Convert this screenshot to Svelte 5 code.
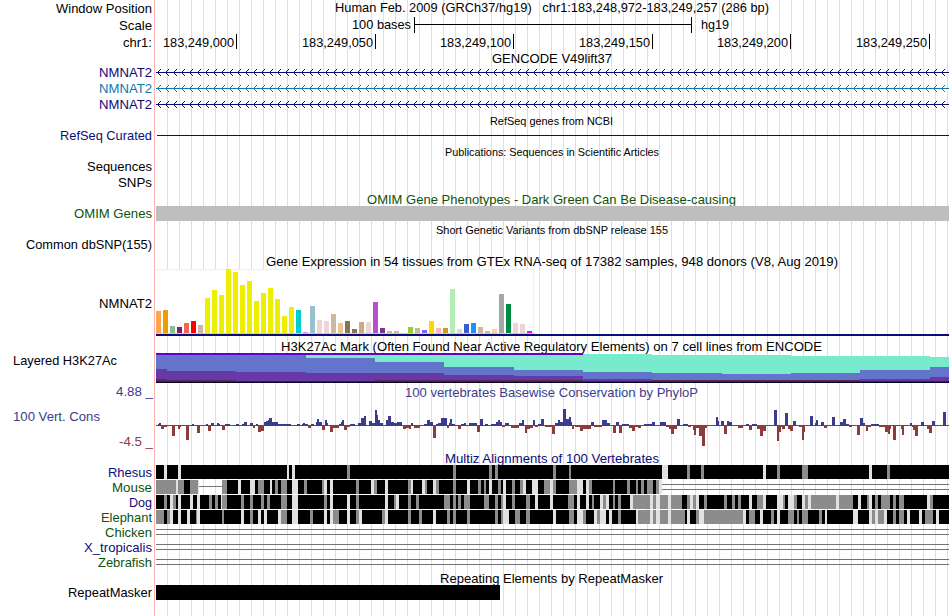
<script lang="ts">
  type Segment = [number, number];
  type Text = { text: string; width: number; color?: string; small?: boolean; y?: number };

  const LEFT = 156;
  const WIDTH = 793;
  const NAVY = '#0c0c78';
  const GREEN = '#0c540c';

  const ticks = [
    { x: 236, label: '183,249,000' },
    { x: 375, label: '183,249,050' },
    { x: 513, label: '183,249,100' },
    { x: 652, label: '183,249,150' },
    { x: 790, label: '183,249,200' },
    { x: 929, label: '183,249,250' }
  ];

  const transcripts = [NAVY, '#0c78b4', NAVY];

  // Chevrons pointing to the reverse strand, one every 8px
  const chevrons = Array.from({ length: 99 }, (_, i) => {
    const x = 157 + i * 8;
    return `M${x + 4} 4L${x + 0.5} 7.5L${x + 4} 11`;
  }).join('');

  // GTEx tissues: colour and bar height
  const tissues: [string, number][] = [
    ['#ffa54f', 22], ['#ee9a00', 23], ['#8fbc8f', 7], ['#8b1c62', 6], ['#ee6a50', 10], ['#ff0000', 12],
    ['#cdb79e', 8], ['#eeee00', 35], ['#eeee00', 43], ['#eeee00', 38], ['#eeee00', 64], ['#eeee00', 61],
    ['#eeee00', 48], ['#eeee00', 52], ['#eeee00', 32], ['#eeee00', 40], ['#eeee00', 45], ['#eeee00', 34],
    ['#eeee00', 17], ['#eeee00', 26], ['#00cdcd', 23], ['#ee82ee', 1], ['#9ac0cd', 27], ['#eed5d2', 13],
    ['#eed5d2', 12], ['#cdb79e', 19], ['#eec591', 10], ['#8b7355', 12], ['#8b7355', 4], ['#cdaa7d', 11],
    ['#eed5d2', 11], ['#b452cd', 31], ['#7a378b', 5], ['#cdb79e', 2], ['#cdb79e', 2], ['#cdb79e', 0],
    ['#9acd32', 6], ['#cdb79e', 5], ['#7a67ee', 3], ['#ffd700', 12], ['#ffb6c1', 5], ['#cd9b1d', 5],
    ['#b4eeb4', 44], ['#d9d9d9', 4], ['#3a5fcd', 9], ['#1e90ff', 10], ['#cdb79e', 6], ['#cdb79e', 2],
    ['#ffd39b', 4], ['#a6a6a6', 39], ['#008b45', 29], ['#eed5d2', 10], ['#eed5d2', 9], ['#ff00ff', 2]
  ];

  // H3K27Ac layers: x, then the top edge of teal, blue, violet and maroon
  const layers = [
    [156, 355, 355, 369, 380],
    [167, 355, 355, 371, 380],
    [236, 355, 355, 372, 381],
    [306, 355, 358, 373, 381],
    [375, 355, 362, 373, 380],
    [444, 355, 367, 375, 380],
    [514, 355, 370, 376, 380],
    [583, 354, 372, 379, 381],
    [652, 355, 373, 380, 380],
    [722, 355, 374, 380, 380],
    [791, 356, 373, 380, 380],
    [860, 356, 370, 379, 381],
    [930, 357, 367, 377, 381]
  ];

  // PhyloP scores: x, width, height (negative values hang below the axis)
  const scores: [number, number, number][] = [
    [158, 1, 1], [159, 2, 2], [161, 3, -4], [164, 3, -2], [172, 3, -11], [178, 2, -4], [180, 1, -2],
    [186, 3, -15], [192, 2, 1], [197, 3, -8], [206, 2, 1], [208, 3, -6], [211, 3, 2], [217, 2, 2],
    [219, 1, 1], [222, 3, -5], [225, 5, 1], [236, 3, 1], [242, 2, 1], [244, 3, 3], [250, 3, 2],
    [253, 2, -3], [256, 2, 1], [258, 3, -7], [261, 3, -6], [264, 2, 3], [266, 2, 4], [268, 1, 5],
    [269, 3, 7], [272, 6, 3], [278, 13, 1], [297, 3, 1], [302, 1, 1], [303, 2, 2], [305, 3, 1],
    [308, 3, -3], [311, 3, 1], [316, 1, 3], [317, 2, 6], [319, 3, 3], [322, 3, -5], [325, 2, 5],
    [327, 1, 2], [330, 3, -7], [333, 6, -3], [339, 2, 1], [341, 1, 3], [342, 2, 5], [344, 3, -5],
    [347, 3, -2], [350, 5, 1], [358, 3, 2], [361, 3, 7], [364, 2, 9], [369, 3, 4], [372, 3, 2],
    [375, 2, 15], [377, 1, 10], [378, 2, 5], [380, 3, 2], [386, 2, 5], [388, 3, 9], [391, 3, 3],
    [394, 3, 2], [397, 5, 3], [403, 3, -4], [406, 3, -3], [409, 2, -4], [411, 2, 2], [414, 6, -3],
    [424, 3, 1], [427, 3, 5], [430, 3, 3], [433, 3, -13], [436, 2, 1], [438, 3, 2], [441, 6, 7],
    [447, 2, -3], [449, 1, 2], [450, 2, 6], [452, 3, 1], [458, 3, -4], [461, 3, 1], [464, 2, 2],
    [469, 8, 2], [477, 3, -7], [480, 3, 6], [485, 3, 1], [491, 5, 1], [496, 2, 3], [498, 2, 5],
    [500, 2, 3], [502, 3, -2], [505, 4, 2], [511, 8, -3], [519, 3, 2], [522, 2, 5], [525, 2, -8],
    [527, 3, -4], [530, 3, -3], [533, 2, 5], [535, 3, -2], [538, 3, 1], [541, 3, 6], [545, 7, -2],
    [552, 3, -9], [555, 3, 2], [558, 2, 5], [560, 3, 3], [563, 3, 16], [566, 3, 6], [569, 2, 8],
    [571, 1, 3], [572, 2, -4], [575, 5, -2], [580, 3, -6], [583, 8, -4], [591, 3, 3], [594, 8, -2],
    [602, 5, 5], [607, 3, 2], [613, 3, -8], [616, 3, 3], [619, 3, -8], [622, 7, 1], [629, 3, -3],
    [632, 3, -6], [635, 3, -2], [638, 3, -3], [644, 8, 1], [652, 3, 3], [660, 6, 3], [666, 3, -2],
    [669, 2, -4], [671, 3, -9], [674, 3, -4], [677, 3, 6], [683, 5, 1], [688, 3, -2], [693, 1, -5],
    [694, 2, -10], [696, 3, -3], [699, 3, -11], [702, 3, -21], [705, 2, -3], [716, 2, 8], [718, 1, 4],
    [721, 3, 4], [724, 3, -9], [727, 2, 4], [729, 3, 3], [738, 5, -3], [746, 3, 1], [749, 3, -5],
    [752, 5, 1], [757, 3, -4], [760, 3, -11], [763, 3, -6], [774, 3, 15], [777, 2, -16], [779, 2, -7],
    [781, 1, -2], [782, 3, -4], [785, 3, 12], [788, 2, -4], [790, 3, -6], [793, 3, 4], [799, 3, -2],
    [802, 2, -15], [804, 1, -7], [810, 3, 9], [815, 1, 2], [816, 2, 5], [821, 3, 3], [824, 3, -3],
    [832, 3, 8], [840, 3, 3], [843, 3, 6], [846, 3, 1], [849, 3, -2], [857, 3, -10], [860, 3, 7],
    [863, 2, 2], [866, 2, -6], [868, 3, -2], [871, 8, 1], [879, 6, -2], [885, 3, -7], [888, 2, -9],
    [890, 1, -4], [893, 3, -15], [901, 1, -4], [902, 2, -10], [910, 2, 2], [912, 1, -2], [913, 2, -5],
    [915, 3, -11], [921, 3, 3], [924, 3, -1], [927, 2, -4], [929, 3, -8], [932, 3, 4], [943, 3, 13]
  ];

  // Alignment blocks: black where conserved, with grey and light stretches
  type Species = {
    name: string;
    width: number;
    color: string;
    end: number;
    gap?: Segment;
    grey?: Segment[];
    light?: Segment[];
  };

  const species: Species[] = [
    {
      name: 'Rhesus', width: 44, color: NAVY, end: 949,
      light: [[164, 3], [178, 3], [287, 2], [292, 3], [662, 6], [763, 3], [869, 3]],
      grey: [[347, 3], [453, 3], [489, 3], [495, 3], [553, 3], [569, 2], [687, 3], [701, 3], [777, 3], [802, 6], [887, 3]]
    },
    {
      name: 'Mouse', width: 40, color: GREEN, end: 662, gap: [199, 23],
      light: [
        [176, 2], [198, 1], [238, 3], [250, 5], [270, 2], [292, 6], [324, 3], [330, 3], [371, 3], [385, 3],
        [411, 2], [422, 3], [433, 3], [467, 3], [489, 3], [503, 3], [523, 3], [532, 6], [550, 3], [577, 6],
        [586, 3], [659, 3]
      ],
      grey: [
        [156, 20], [178, 6], [190, 8], [222, 5], [258, 6], [275, 3], [281, 6], [304, 3], [322, 2], [356, 3],
        [374, 3], [408, 3], [425, 2], [436, 3], [453, 3], [478, 3], [484, 2], [498, 3], [512, 3], [520, 3],
        [544, 6], [553, 3], [569, 8], [589, 3], [613, 2], [627, 3], [636, 2], [641, 3], [647, 6], [656, 3]
      ]
    },
    {
      name: 'Dog', width: 23, color: NAVY, end: 949,
      light: [
        [170, 3], [178, 3], [190, 3], [197, 3], [221, 1], [292, 6], [330, 3], [347, 3], [385, 3], [396, 3],
        [503, 3], [535, 3], [550, 3], [577, 3], [586, 3], [600, 3], [606, 3], [630, 3], [650, 3], [656, 4],
        [668, 3], [690, 3], [696, 3], [749, 3], [763, 3], [777, 6], [788, 6], [802, 3], [808, 3], [836, 3],
        [858, 3], [869, 3], [927, 3]
      ],
      grey: [
        [164, 3], [173, 3], [209, 3], [215, 3], [222, 5], [241, 3], [250, 3], [261, 3], [267, 3], [281, 6],
        [324, 3], [356, 3], [394, 2], [408, 3], [416, 3], [444, 6], [453, 3], [458, 3], [464, 6], [484, 5],
        [495, 3], [501, 2], [512, 3], [526, 4], [568, 6], [592, 2], [603, 3], [613, 2], [618, 3], [633, 17],
        [653, 3], [660, 8], [671, 11], [687, 3], [693, 3], [704, 3], [724, 3], [732, 3], [738, 3], [757, 6],
        [783, 2], [794, 3], [805, 3], [811, 25], [839, 14], [867, 2], [875, 3], [881, 9], [893, 3], [899, 5],
        [930, 3]
      ]
    },
    {
      name: 'Elephant', width: 51, color: GREEN, end: 949,
      light: [
        [170, 3], [178, 3], [187, 3], [197, 3], [241, 3], [258, 3], [264, 3], [278, 3], [292, 6], [324, 3],
        [330, 3], [347, 3], [359, 3], [385, 3], [433, 3], [503, 6], [553, 3], [577, 6], [594, 3], [600, 6],
        [609, 3], [636, 2], [650, 3], [656, 4], [668, 3], [687, 3], [699, 5], [743, 3], [760, 3], [777, 3],
        [825, 2], [853, 5], [869, 3], [875, 3], [884, 3], [907, 3], [919, 3], [936, 3]
      ],
      grey: [
        [156, 8], [167, 3], [196, 1], [222, 2], [250, 3], [281, 6], [310, 3], [333, 6], [356, 3], [382, 3],
        [408, 3], [419, 3], [447, 3], [453, 3], [467, 3], [495, 3], [501, 2], [515, 5], [526, 4], [569, 5],
        [583, 3], [597, 3], [618, 3], [638, 12], [653, 3], [660, 8], [671, 14], [696, 3], [704, 39], [749, 6],
        [771, 3], [788, 6], [797, 2], [802, 6], [819, 3], [872, 3], [878, 6], [893, 3], [899, 5], [925, 8]
      ]
    },
    { name: 'Chicken', width: 47, color: GREEN, end: 156 },
    { name: 'X_tropicalis', width: 68, color: NAVY, end: 156 },
    { name: 'Zebrafish', width: 54, color: GREEN, end: 156 }
  ];
</script>

{#snippet fitted({ text, width, color = '#000', small = false, y = 12 }: Text)}
  <svg class="text" class:small {width} height="15">
    <text x="0" {y} fill={color} textLength={width} lengthAdjust="spacingAndGlyphs" xml:space="preserve">{text}</text>
  </svg>
{/snippet}

{#snippet title(t: Text)}
  <div class="row" style="height: 15px">
    <div class="label"></div>
    <div class="title">{@render fitted({ y: t.small ? 12 : 13, ...t })}</div>
  </div>
{/snippet}

<main class="browser">
  <div class="row" style="height: 17px">
    <div class="label">{@render fitted({ text: 'Window Position', width: 96, y: 13 })}</div>
    <div class="title">
      {@render fitted({ text: 'Human Feb. 2009 (GRCh37/hg19)   chr1:183,248,972-183,249,257 (286 bp)', width: 434 })}
    </div>
  </div>

  <div class="row" style="height: 17px">
    <div class="label">{@render fitted({ text: 'Scale', width: 33, y: 13 })}</div>
    <svg class="data" viewBox="{LEFT} 17 {WIDTH} 17" width={WIDTH} height="17">
      <text x="352" y="29" textLength="59" lengthAdjust="spacingAndGlyphs">100 bases</text>
      <rect x="414" y="24" width="278" height="1" />
      <rect x="414" y="17" width="1" height="16" />
      <rect x="691" y="17" width="1" height="16" />
      <text x="701" y="29" textLength="28" lengthAdjust="spacingAndGlyphs">hg19</text>
    </svg>
  </div>

  <div class="row" style="height: 16px">
    <div class="label">{@render fitted({ text: 'chr1:', width: 29, y: 13 })}</div>
    <svg class="data" viewBox="{LEFT} 34 {WIDTH} 16" width={WIDTH} height="16">
      {#each ticks as tick}
        <text x={tick.x - 73} y="47" textLength="71" lengthAdjust="spacingAndGlyphs">{tick.label}</text>
        <rect x={tick.x} y="34" width="1" height="15" />
      {/each}
    </svg>
  </div>

  {@render title({ text: 'GENCODE V49lift37', width: 120 })}
  {#each transcripts as color}
    <div class="row" style="height: 16px">
      <div class="label">{@render fitted({ text: 'NMNAT2', width: 53, color })}</div>
      <svg class="data" viewBox="{LEFT} 0 {WIDTH} 16" width={WIDTH} height="16">
        <rect x="156" y="7" width="793" height="1" fill={color} />
        <path d={chevrons} fill="none" stroke={color} stroke-width="1" />
      </svg>
    </div>
  {/each}

  {@render title({ text: 'RefSeq genes from NCBI', width: 123, small: true })}
  <div class="row" style="height: 16px">
    <div class="label">{@render fitted({ text: 'RefSeq Curated', width: 92, color: NAVY })}</div>
    <svg class="data" viewBox="{LEFT} 0 {WIDTH} 16" width={WIDTH} height="16">
      <rect x="157" y="7" width="792" height="1" fill={NAVY} />
    </svg>
  </div>

  {@render title({ text: 'Publications: Sequences in Scientific Articles', width: 214, small: true })}
  <div class="row" style="height: 16px">
    <div class="label">{@render fitted({ text: 'Sequences', width: 65 })}</div>
  </div>
  <div class="row" style="height: 16px">
    <div class="label">{@render fitted({ text: 'SNPs', width: 34 })}</div>
  </div>

  {@render title({ text: 'OMIM Gene Phenotypes - Dark Green Can Be Disease-causing', width: 369, color: GREEN })}
  <div class="row" style="height: 16px">
    <div class="label">{@render fitted({ text: 'OMIM Genes', width: 78, color: GREEN })}</div>
    <div class="omim"></div>
  </div>

  {@render title({ text: 'Short Genetic Variants from dbSNP release 155', width: 232, small: true })}
  <div class="row" style="height: 16px">
    <div class="label">{@render fitted({ text: 'Common dbSNP(155)', width: 126 })}</div>
  </div>

  {@render title({
    text: 'Gene Expression in 54 tissues from GTEx RNA-seq of 17382 samples, 948 donors (V8, Aug 2019)',
    width: 572
  })}
  <div class="row" style="height: 70px">
    <div class="label middle">{@render fitted({ text: 'NMNAT2', width: 53 })}</div>
    <svg class="data" viewBox="{LEFT} 268 {WIDTH} 70" width={WIDTH} height="70">
      <rect x="156" y="269" width="378" height="65" fill="#f0f0f0" />
      <rect x="156" y="270" width="377" height="63" fill="#fff" />
      <rect x="156" y="333" width="378" height="1" fill="#ccc" />
      {#each tissues as [color, height], i}
        <rect x={156 + i * 7} y={333 - height} width="5" {height} fill={color} />
      {/each}
      <rect x="156" y="334" width="793" height="2" fill={NAVY} />
    </svg>
  </div>

  <div class="row" style="height: 46px">
    <div class="label h3k">{@render fitted({ text: 'Layered H3K27Ac', width: 104 })}</div>
    <div class="stack">
      <div class="title" style="height: 15px">
        {@render fitted({
          text: 'H3K27Ac Mark (Often Found Near Active Regulatory Elements) on 7 cell lines from ENCODE',
          width: 541,
          y: 13
        })}
      </div>
      <svg class="data" viewBox="{LEFT} 353 {WIDTH} 31" width={WIDTH} height="31">
        <rect x="156" y="353" width="427" height="2" fill="#6600c8" />
        {#each layers as [x, teal, blue, violet, maroon], i}
          {@const width = (layers[i + 1]?.[0] ?? 949) - x}
          <rect {x} y={teal} {width} height={383 - teal} fill="#78ebcd" />
          <rect {x} y={blue} {width} height={383 - blue} fill="#6275cb" />
          <rect {x} y={violet} {width} height={383 - violet} fill="#6639a6" />
          <rect {x} y={maroon} {width} height={383 - maroon} fill="#5c2b55" />
        {/each}
        <rect x="156" y="379" width="11" height="1" fill="#2d37a5" />
        <rect x="156" y="381" width="793" height="1" fill="#322350" />
        <rect x="156" y="382" width="793" height="1" fill="#0a0528" />
      </svg>
    </div>
  </div>

  <div class="row" style="height: 66px">
    <div class="label scale">
      {@render fitted({ text: '4.88 _', width: 37, color: '#3c3c8c' })}
      <div class="cons">{@render fitted({ text: '100 Vert. Cons', width: 87, color: '#3c3c8c' })}</div>
      {@render fitted({ text: '-4.5 _', width: 34, color: '#8c3c3c' })}
    </div>
    <div class="stack">
      <div class="title" style="height: 16px">
        {@render fitted({ text: '100 vertebrates Basewise Conservation by PhyloP', width: 293, color: '#3c3c8c', y: 13 })}
      </div>
      <svg class="data" viewBox="{LEFT} 400 {WIDTH} 50" width={WIDTH} height="50">
        <rect x="156" y="425" width="793" height="1" fill="#8c3c3c" />
        {#each scores as [x, width, score]}
          {#if score > 0}
            <rect {x} y={425 - score} {width} height={score} fill="#3c3c8c" />
            <rect {x} y="425" {width} height="1" fill="#3c3c8c" />
          {:else}
            <rect {x} y="425" {width} height={-score} fill="#8c3c3c" />
          {/if}
        {/each}
      </svg>
    </div>
  </div>

  {@render title({ text: 'Multiz Alignments of 100 Vertebrates', width: 214, color: NAVY })}
  {#each species as { name, width, color, end, gap, grey = [], light = [] }}
    <div class="row" style="height: 15px">
      <div class="label">{@render fitted({ text: name, width, color })}</div>
      <svg class="data" viewBox="{LEFT} 0 {WIDTH} 15" width={WIDTH} height="15">
        {#if end < 949}
          <rect x={end} y="4" width={949 - end} height="1" fill="#737373" />
          <rect x={end} y="9" width={949 - end} height="1" fill="#737373" />
        {/if}
        {#if end > LEFT}
          {#if gap}
            <rect x={LEFT} y="0" width={gap[0] - LEFT} height="14" />
            <rect x={gap[0]} y="6" width={gap[1]} height="1" fill="#737373" />
            <rect x={gap[0] + gap[1]} y="0" width={end - gap[0] - gap[1]} height="14" />
          {:else}
            <rect x={LEFT} y="0" width={end - LEFT} height="14" />
          {/if}
        {/if}
        {#each grey as [x, w]}
          <rect {x} y="0" width={w} height="14" fill="#8c8c8c" />
        {/each}
        {#each light as [x, w]}
          <rect {x} y="0" width={w} height="14" fill="#e1e1e1" />
        {/each}
      </svg>
    </div>
  {/each}

  {@render title({ text: 'Repeating Elements by RepeatMasker', width: 223 })}
  <div class="row" style="height: 16px">
    <div class="label">{@render fitted({ text: 'RepeatMasker', width: 84 })}</div>
    <div class="repeat"></div>
  </div>
</main>

<style>
  :global(body) {
    margin: 0;
    background: #fff;
  }

  .browser {
    width: 950px;
    height: 616px;
    overflow: hidden;
    font-family: 'Liberation Sans', Arial, Helvetica, sans-serif;
    font-size: 13.5px;
    background:
      linear-gradient(#ffb4b4, #ffb4b4) 154px 0 / 1px 100% no-repeat,
      repeating-linear-gradient(90deg, #dcdcf8 0 1px, transparent 1px 12px) 167px 0 / 782px 100% no-repeat;
  }

  .row {
    display: flex;
  }

  .label {
    box-sizing: border-box;
    flex: none;
    width: 156px;
    padding-right: 4px;
    display: flex;
    justify-content: flex-end;
    align-items: flex-start;
  }

  .label.middle {
    padding-top: 28px;
  }

  .label.h3k {
    justify-content: flex-start;
    padding: 15px 0 0 13px;
  }

  .label.scale {
    flex-direction: column;
    justify-content: flex-start;
    align-items: flex-end;
    padding-right: 3px;
  }

  .cons {
    align-self: flex-start;
    display: flex;
    padding: 10px 0 10px 13px;
  }

  .stack {
    display: flex;
    flex-direction: column;
  }

  .title {
    box-sizing: border-box;
    width: 793px;
    padding-right: 2px;
    display: flex;
    justify-content: center;
    align-items: flex-start;
  }

  .text,
  .data {
    display: block;
    flex: none;
    overflow: visible;
  }

  .small {
    font-size: 11.5px;
  }

  .omim {
    width: 793px;
    height: 15px;
    background: #bebebe;
  }

  .repeat {
    width: 344px;
    height: 15px;
    background: #000;
  }
</style>
